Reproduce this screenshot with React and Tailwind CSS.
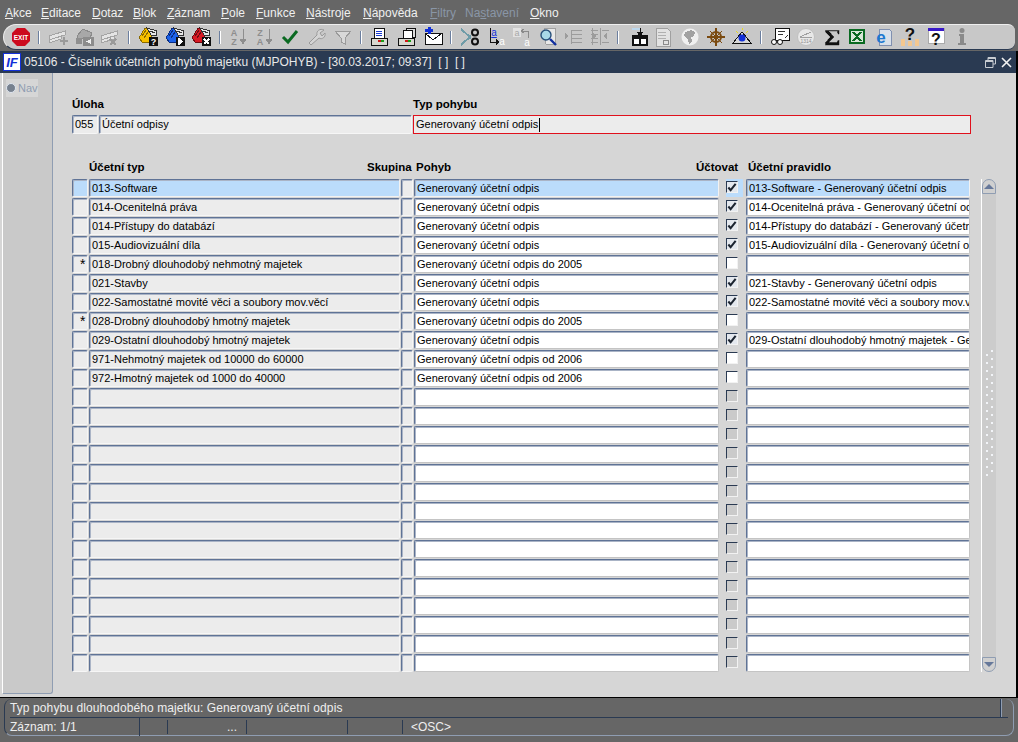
import React from 'react';

const menus = [
  ['A', 'kce', 'w-[36px]'],
  ['E', 'ditace', 'w-[51px]'],
  ['D', 'otaz', 'w-[41px]'],
  ['B', 'lok', 'w-[34px]'],
  ['Z', 'áznam', 'w-[54px]'],
  ['P', 'ole', 'w-[35px]'],
  ['F', 'unkce', 'w-[50px]'],
  ['N', 'ástroje', 'w-[57px]'],
  ['N', 'ápověda', 'w-[67px]'],
];

const rows = [
  { typ: '013-Software', pohyb: 'Generovaný účetní odpis', check: true, rule: '013-Software - Generovaný účetní odpis', active: true },
  { typ: '014-Ocenitelná práva', pohyb: 'Generovaný účetní odpis', check: true, rule: '014-Ocenitelná práva - Generovaný účetní odpis' },
  { typ: '014-Přístupy do databází', pohyb: 'Generovaný účetní odpis', check: true, rule: '014-Přístupy do databází - Generovaný účetní odpis' },
  { typ: '015-Audiovizuální díla', pohyb: 'Generovaný účetní odpis', check: true, rule: '015-Audiovizuální díla - Generovaný účetní odpis' },
  { typ: '018-Drobný dlouhodobý nehmotný majetek', pohyb: 'Generovaný účetní odpis do 2005', check: false, rule: '', star: true },
  { typ: '021-Stavby', pohyb: 'Generovaný účetní odpis', check: true, rule: '021-Stavby - Generovaný účetní odpis' },
  { typ: '022-Samostatné movité věci a soubory mov.věcí', pohyb: 'Generovaný účetní odpis', check: true, rule: '022-Samostatné movité věci a soubory mov.věcí - Generovaný' },
  { typ: '028-Drobný dlouhodobý hmotný majetek', pohyb: 'Generovaný účetní odpis do 2005', check: false, rule: '', star: true },
  { typ: '029-Ostatní dlouhodobý hmotný majetek', pohyb: 'Generovaný účetní odpis', check: true, rule: '029-Ostatní dlouhodobý hmotný majetek - Generovaný účetní odpis' },
  { typ: '971-Nehmotný majetek od 10000 do 60000', pohyb: 'Generovaný účetní odpis od 2006', check: false, rule: '' },
  { typ: '972-Hmotný majetek od 1000 do 40000', pohyb: 'Generovaný účetní odpis od 2006', check: false, rule: '' },
];
const allRows = [...rows, ...Array.from({ length: 15 }, () => ({ empty: true }))];

function Field({ className = '', tone = 'grey', children }) {
  const bg = tone === 'active' ? 'bg-[#bbdcfb] border-r-[#f2f2f2] border-b-[#f2f2f2]' : tone === 'white' ? 'bg-white border-r-[#c4c4c4] border-b-[#c4c4c4]' : 'bg-[#ececec] border-r-[#f6f6f6] border-b-[#f6f6f6]';
  return (
    <div className={`h-[18px] shrink-0 overflow-hidden whitespace-nowrap rounded-[2px] border border-t-[#5f7396] border-l-[#5f7396] pl-[2px] pt-[1px] text-[11px] leading-[15px] text-black shadow-[inset_1px_1px_0_#aab4c6] ${bg} ${className}`}>
      {children}
    </div>
  );
}

function Check({ checked, empty, active }) {
  return (
    <div className={`ml-[7px] mr-[3px] flex h-[18px] w-[17px] shrink-0 items-start ${active ? 'bg-[#bbdcfb]' : ''}`}>
      <div className={`mt-[2px] flex h-[12px] w-[12px] items-center justify-center border border-t-[#2a3a52] border-l-[#2a3a52] border-r-[#f2f2f2] border-b-[#f2f2f2] ${empty ? 'bg-[#cacaca]' : checked ? 'bg-[#e4e8ee]' : 'bg-white'}`}>
        {checked && (
          <svg width="11" height="11" viewBox="0 0 11 11">
            <path d="M1.5 5.5 L4 8.5 L9.5 1.5" fill="none" stroke="#1c2430" strokeWidth="2.2" />
          </svg>
        )}
      </div>
    </div>
  );
}

function Ico({ children, className = '' }) {
  return (
    <div className={`flex h-[26px] w-[26px] shrink-0 items-center justify-center ${className}`}>
      <svg width="20" height="20" viewBox="0 0 20 20" shapeRendering="crispEdges" style={{ fontFamily: '"Liberation Sans", sans-serif' }}>
        {children}
      </svg>
    </div>
  );
}

function Sep({ className = 'w-[10px]' }) {
  return (
    <div className={`flex h-[26px] shrink-0 items-center justify-center ${className}`}>
      <div className="h-[13px] w-[2px] border-l border-l-[#6c7f9f] bg-white" />
    </div>
  );
}

function Folder({ color, dark, children }) {
  return (
    <>
      <path d="M0 11 L6 1 L14 4 L11 16 L3 15 Z" fill={color} stroke={dark} strokeWidth="1" />
      <path d="M3 9 L7 3 M5 11 L9 5" stroke={dark} strokeWidth="1" />
      <path d="M8 1 L18 4 L17 9 L12 8 Z" fill="#e8e8e8" stroke="#333" strokeWidth="1" />
      <path d="M11 4 L16 6" stroke="#333" />
      <rect x="10" y="10" width="9" height="9" fill="#111" />
      {children}
    </>
  );
}

function Toolbar() {
  return (
    <div className="mx-[3px] flex h-[26px] items-center rounded-l-[13px] rounded-tr-[7px] rounded-br-[7px] border-t border-l border-t-[#eeeeee] border-l-[#eeeeee] border-b border-b-[#2a3a52] bg-[#c8c8c8] pl-[4px] pr-[6px]">
      <Ico>
        <path d="M6 1 H14 L19 6 V14 L14 19 H6 L1 14 V6 Z" fill="#cc0a1e" shapeRendering="auto" />
        <text x="10" y="12.5" textAnchor="middle" fontSize="6.5" fontWeight="700" fill="#fff">EXIT</text>
      </Ico>
      <Sep />
      <Ico className="ml-[1px]">
        <path d="M1 9 L17 4 V8 L1 13 Z M1 13 L13 9 V12 L1 16 Z" fill="#e4e4e4" stroke="#a4a4a4" strokeWidth="1" />
        <path d="M12 13 H15 V10 H17 V13 H20 V15 H17 V18 H15 V15 H12 Z" fill="#9a9a9a" />
      </Ico>
      <Ico className="ml-[1px]">
        <path d="M2 9 L8 2 L17 6 L15 11 H3 Z" fill="#a8a8a8" stroke="#8a8a8a" strokeWidth="1" />
        <rect x="1" y="11" width="6" height="6" fill="#8f8f8f" />
        <rect x="8" y="10" width="11" height="9" fill="#8c8c8c" />
        <path d="M16 12 V17 L11 14.5 Z" fill="#eee" />
      </Ico>
      <Ico className="-ml-[1px]">
        <path d="M1 9 L17 4 V8 L1 13 Z M1 13 L14 9 V12 L1 16 Z" fill="#e4e4e4" stroke="#a4a4a4" strokeWidth="1" />
        <path d="M10 12 L16 18 M16 12 L10 18" stroke="#9a9a9a" strokeWidth="2" />
      </Ico>
      <Sep className="w-[12px]" />
      <Ico className="ml-[1px]">
        <Folder color="#f7c000" dark="#8a6a00">
          <text x="14.5" y="18" textAnchor="middle" fontSize="9" fontWeight="700" fill="#fff">?</text>
        </Folder>
      </Ico>
      <Ico className="ml-[1px]">
        <Folder color="#1c62e8" dark="#0a2c80">
          <path d="M12 11 H13 L17 14 V15 L13 18 H12 Z" fill="#fff" />
        </Folder>
      </Ico>
      <Ico>
        <Folder color="#d81a24" dark="#700a10">
          <path d="M12 12 L17 17 M17 12 L12 17" stroke="#fff" strokeWidth="1.6" />
        </Folder>
      </Ico>
      <Sep className="w-[10px]" />
      <Ico>
        <text x="6" y="9" textAnchor="middle" fontSize="9" fontWeight="700" fill="#8e8e8e">A</text>
        <text x="6" y="18" textAnchor="middle" fontSize="9" fontWeight="700" fill="#8e8e8e">Z</text>
        <path d="M15 2 V15 M12 12 H18 L15 17 Z" stroke="#8e8e8e" fill="#8e8e8e" strokeWidth="1" />
      </Ico>
      <Ico>
        <text x="6" y="9" textAnchor="middle" fontSize="9" fontWeight="700" fill="#8e8e8e">Z</text>
        <text x="6" y="18" textAnchor="middle" fontSize="9" fontWeight="700" fill="#8e8e8e">A</text>
        <path d="M15 2 V15 M12 12 H18 L15 17 Z" stroke="#8e8e8e" fill="#8e8e8e" strokeWidth="1" />
      </Ico>
      <Ico>
        <path d="M3 10 L8 15 L17 4" fill="none" stroke="#0b6a22" strokeWidth="3" shapeRendering="auto" />
      </Ico>
      <Ico className="ml-[1px]">
        <path d="M4 18 L2 16 L10 8 C9 4 13 1 17 3 L13 6 L15 9 L18 6 C19 10 15 13 12 11 Z" fill="#d4d4d4" stroke="#9a9a9a" strokeWidth="1" shapeRendering="auto" />
      </Ico>
      <Ico>
        <path d="M2 4 H18 L12 11 V17 L8 15 V11 Z" fill="#d8d8d8" stroke="#9a9a9a" strokeWidth="1" />
      </Ico>
      <Sep className="w-[10px]" />
      <Ico>
        <rect x="5" y="1" width="10" height="10" fill="#fff" stroke="#111" />
        <path d="M7 4 H13 M7 6 H13 M7 8 H13" stroke="#1a3ad0" />
        <rect x="2" y="11" width="16" height="7" fill="#d8d8d0" stroke="#111" />
        <rect x="9" y="13" width="3" height="2" fill="#d01818" />
        <rect x="12" y="13" width="3" height="2" fill="#18a018" />
      </Ico>
      <Ico className="ml-[2px]">
        <rect x="9" y="1" width="9" height="9" fill="#ddd" stroke="#111" />
        <rect x="6" y="3" width="9" height="9" fill="#fff" stroke="#111" />
        <rect x="1" y="11" width="16" height="7" fill="#d8d8d0" stroke="#111" />
        <rect x="8" y="13" width="3" height="2" fill="#d01818" />
        <rect x="11" y="13" width="3" height="2" fill="#18a018" />
      </Ico>
      <Ico>
        <rect x="2" y="6" width="17" height="11" fill="#fff" stroke="#111" />
        <path d="M2 6 L10 13 L19 6" fill="none" stroke="#111" />
        <path d="M2 2 H5 V0 H8 V2 H10 V5 H8 V7 H5 V5 H2 Z" fill="#1230d8" />
      </Ico>
      <Sep className="w-[10px]" />
      <Ico className="ml-[1px]">
        <path d="M1 2 L11 11 M1 18 L11 9" stroke="#6f9ca8" strokeWidth="2" />
        <circle cx="15" cy="5.5" r="3" fill="none" stroke="#111" strokeWidth="2" shapeRendering="auto" />
        <circle cx="15" cy="14.5" r="3" fill="none" stroke="#111" strokeWidth="2" shapeRendering="auto" />
      </Ico>
      <Ico>
        <text x="8" y="9" textAnchor="middle" fontSize="10" fill="#1230d8" textDecoration="underline">a</text>
        <path d="M4 1 V15 H11" fill="none" stroke="#111" />
        <path d="M10 12 L14 15 L10 18 Z" fill="#111" />
        <text x="16" y="18" textAnchor="middle" fontSize="10" fill="#fff">a</text>
      </Ico>
      <Ico>
        <rect x="1" y="1" width="8" height="9" fill="#e2e2e2" />
        <text x="5" y="9" textAnchor="middle" fontSize="9" fill="#a8a8a8">a</text>
        <path d="M16 4 H10 M12 2 L9 4 L12 6 M16 4 V11" fill="none" stroke="#8a8a8a" />
        <text x="15" y="19" textAnchor="middle" fontSize="10" fill="#fff">a</text>
      </Ico>
      <Ico>
        <path d="M6 1 H17 V17 H8 Z" fill="#e8e8e8" stroke="#a0a0a0" />
        <circle cx="8" cy="8" r="5" fill="#a8d8e8" stroke="#28507a" strokeWidth="1.4" shapeRendering="auto" />
        <path d="M12 12 L18 18" stroke="#1230a0" strokeWidth="2.4" shapeRendering="auto" />
      </Ico>
      <Ico>
        <path d="M7 3 H18 M7 7 H18 M7 11 H18 M7 15 H18" stroke="#9c9c9c" />
        <path d="M7 3 V17" stroke="#9c9c9c" />
        <path d="M1 6 L5 9 L1 12 Z" fill="#9c9c9c" />
      </Ico>
      <Ico>
        <path d="M1 3 H8 M1 7 H8 M1 11 H8 M1 15 H8 M12 3 H19 M12 15 H19 M10 1 V18 M2 1 V18" stroke="#9c9c9c" />
        <path d="M3 6 L7 9 L3 12 Z M17 6 L13 9 L17 12 Z" fill="#9c9c9c" />
      </Ico>
      <Sep className="w-[10px]" />
      <Ico className="ml-[4px]">
        <rect x="2" y="8" width="16" height="11" fill="#111" />
        <path d="M2 1 H10 V3 H2 Z" fill="#bcd8ee" />
        <rect x="4" y="12" width="5" height="5" fill="#fff" />
        <rect x="11" y="12" width="5" height="5" fill="#fff" />
        <path d="M10 1 V8 M7 5 H13 L10 9 Z" stroke="#111" fill="#111" />
      </Ico>
      <Ico className="-ml-[3px]">
        <path d="M3 1 H14 L17 4 V19 H3 Z" fill="#e2e2e2" stroke="#a0a0a0" />
        <path d="M5 5 H13 M5 8 H13 M5 11 H13" stroke="#b0b0b0" />
        <rect x="10" y="13" width="5" height="4" fill="none" stroke="#8a8a8a" />
      </Ico>
      <Ico className="ml-[1px]">
        <circle cx="10" cy="10" r="8.5" fill="#f0f0f0" shapeRendering="auto" />
        <path d="M5 5 L11 3 L15 5 L14 9 L11 10 L12 14 L9 17 L8 12 L4 9 Z" fill="#a2a2a2" />
      </Ico>
      <Ico>
        <circle cx="10" cy="10" r="5" fill="none" stroke="#7a4a10" strokeWidth="2" shapeRendering="auto" />
        <path d="M1 10 H19 M10 1 V19 M4 4 L16 16 M16 4 L4 16" stroke="#7a4a10" strokeWidth="1.4" />
      </Ico>
      <Ico>
        <path d="M1 16 L10 5 L19 16 Z" fill="#d8d8d8" stroke="#111" strokeWidth="1" />
        <circle cx="10" cy="11" r="3.5" fill="#1230d8" shapeRendering="auto" />
        <path d="M4 4 L6 6 M10 1 V3 M16 4 L14 6" stroke="#e8dc20" strokeWidth="1" />
      </Ico>
      <Sep className="w-[12px]" />
      <Ico>
        <path d="M5 1 H19 V13 H5 Z" fill="#fff" stroke="#111" />
        <path d="M8 4 H15 M8 7 H13 M15 11 L18 8" stroke="#333" />
        <circle cx="4" cy="15" r="2.5" fill="#fff" stroke="#111" shapeRendering="auto" />
        <circle cx="10" cy="15" r="2.5" fill="#fff" stroke="#111" shapeRendering="auto" />
      </Ico>
      <Ico>
        <circle cx="10" cy="10" r="8.5" fill="#e8e8e8" stroke="#c0c0c0" shapeRendering="auto" />
        <path d="M4 10 L15 5 M4 10 H16" stroke="#a0a0a0" />
        <text x="10" y="16" textAnchor="middle" fontSize="5" fill="#909090">1314</text>
      </Ico>
      <Ico>
        <path d="M3 3 H17 V7 H16 L15 4 H7 L12 10 L7 15 H15 L16 13 H17 V18 H3 V16 L8 10 L3 5 Z" fill="#111" stroke="#777" strokeWidth="0.5" />
      </Ico>
      <Ico className="-ml-[1px]">
        <rect x="2" y="2" width="16" height="15" fill="#0a6a22" />
        <rect x="4" y="4" width="12" height="11" fill="#d8e8d8" />
        <path d="M6 5 L14 14 M14 5 L6 14" stroke="#0a6a22" strokeWidth="2" />
      </Ico>
      <Ico>
        <path d="M6 2 H16 L18 4 V18 H6 Z" fill="#d8e0ea" stroke="#8090b0" />
        <text x="8" y="16" textAnchor="middle" fontSize="17" fontWeight="700" fill="#1c78d0">e</text>
      </Ico>
      <Ico className="ml-[1px]">
        <text x="10" y="13" textAnchor="middle" fontSize="17" fontWeight="700" fill="#111">?</text>
        <rect x="1" y="12" width="4" height="7" fill="#f4c890" />
        <rect x="8" y="14" width="4" height="5" fill="#f4c890" />
        <rect x="15" y="12" width="4" height="7" fill="#f4c890" />
      </Ico>
      <Ico>
        <rect x="2" y="1" width="16" height="15" fill="#fff" stroke="#aaa" />
        <rect x="2" y="1" width="16" height="3" fill="#3818c8" />
        <text x="10" y="18" textAnchor="middle" fontSize="16" fontWeight="700" fill="#111">?</text>
      </Ico>
      <Ico>
        <circle cx="10" cy="3.5" r="2.5" fill="#8a8a8a" shapeRendering="auto" />
        <path d="M7 7 H12 V16 H14 V18 H6 V16 H8 V9 H7 Z" fill="#8a8a8a" />
      </Ico>
    </div>
  );
}

function GripColumn({ className = '' }) {
  return (
    <div className={`flex flex-col gap-[6px] ${className}`}>
      {Array.from({ length: 16 }, (_, i) => (
        <div key={i} className="h-[2px] w-[2px] bg-[#f2f4f8]" />
      ))}
    </div>
  );
}

function App() {
  return (
    <div className="flex h-[742px] w-[1018px] flex-col overflow-hidden bg-[#666666] text-[12px] font-['Liberation_Sans',Arial,sans-serif]">
      <div className="flex h-[24px] shrink-0 items-center pl-[5px] pt-[1px] text-[12px] text-[#f0f0f0]">
        {menus.map((m, i) => (
          <div key={i} className={m[2]}>
            <span className="underline">{m[0]}</span>{m[1]}
          </div>
        ))}
        <div className="w-[35px] text-[#8a96a6]">
          <span className="underline">F</span>iltry
        </div>
        <div className="w-[65px] text-[#8a96a6]">
          Na<span className="underline">s</span>tavení
        </div>
        <div>
          <span className="underline">O</span>kno
        </div>
      </div>

      <Toolbar />

      <div className="mt-[1px] flex h-[647px] shrink-0 flex-col border-r-2 border-b border-r-black border-b-black">
        <div className="flex h-[22px] shrink-0 items-center bg-[#2a3a52] pl-[3px] text-[#e8e8e8]">
          <svg width="18" height="18" viewBox="0 0 18 18" className="mr-[3px] shrink-0" style={{ fontFamily: '"Liberation Sans", sans-serif' }}>
            <rect x="0.5" y="0.5" width="17" height="17" fill="#fff" stroke="#1230d8" />
            <text x="9" y="14" textAnchor="middle" fontSize="13" fontWeight="700" fontStyle="italic" fill="#1230d8">IF</text>
          </svg>
          <span className="whitespace-pre">05106 - Číselník účetních pohybů majetku (MJPOHYB) - [30.03.2017; 09:37]  [ ]  [ ]</span>
          <div className="ml-auto mr-[4px] flex items-center gap-[5px]">
            <svg width="11" height="11" viewBox="0 0 11 11">
              <path d="M3 3 V0.5 H10.5 V7 H8 M0.5 3.5 H8 V10.5 H0.5 Z M3 1.5 H10 M1 4.5 H8" fill="none" stroke="#c8ccd2" />
            </svg>
            <svg width="11" height="11" viewBox="0 0 11 11">
              <path d="M1 1 L10 10 M10 1 L1 10" stroke="#f2f2f2" strokeWidth="1.6" />
            </svg>
          </div>
        </div>

        <div className="flex min-h-0 flex-1 bg-[#d6d6d6]">
          <div className="ml-[2px] mb-[3px] w-[51px] shrink-0 rounded-br-[3px] border-l border-r border-b border-l-white border-r-[#8f9db2] border-b-[#8f9db2] bg-[#c9c9c9] pl-[3px] pt-[6px]">
            <div className="flex h-[18px] w-[32px] items-center gap-[2px] bg-[#d6d6d6] text-[11px] text-[#8f9db2]">
              <div className="h-[10px] w-[10px] shrink-0 rounded-full border border-[#dfe6f0] bg-[#77818f]" />
              Nav
            </div>
          </div>

          <div className="min-w-0 flex-1 pl-[19px]">
            <div className="h-[23px]" />
            <div className="flex h-[18px] items-center text-[11.5px] font-bold text-black">
              <div className="w-[341px]">Úloha</div>
              <div>Typ pohybu</div>
            </div>
            <div className="mt-[1px] flex h-[19px]">
              <Field className="h-[19px] w-[26px]">055</Field>
              <Field className="ml-[1px] h-[19px] w-[313px]">Účetní odpisy</Field>
              <div className="ml-[1px] flex h-[19px] w-[558px] items-center border border-[#e0101c] bg-[#ececec] pl-[2px] text-[11px] text-black">
                Generovaný účetní odpis
                <div className="ml-[1px] h-[14px] w-[1px] bg-black" />
              </div>
            </div>

            <div className="mt-[23px] flex h-[21px] items-center text-[11.5px] font-bold text-black">
              <div className="ml-[17px] w-[278px]">Účetní typ</div>
              <div className="w-[44px] text-right">Skupina</div>
              <div className="ml-[5px] w-[280px]">Pohyb</div>
              <div className="w-[37px] text-right">Účtovat</div>
              <div className="ml-[15px]">Účetní pravidlo</div>
            </div>

            <div className="mt-[1px] flex">
              <div className="flex w-[898px] shrink-0 flex-col gap-[1px]">
                {allRows.map((r, i) => (
                  <div key={i} className="flex">
                    <Field tone={r.active ? 'active' : 'grey'} className="w-[16px]">
                      {r.star && <div className="pl-[5px] text-[14px] leading-[14px]">*</div>}
                    </Field>
                    <Field tone={r.active ? 'active' : 'grey'} className="ml-[1px] w-[311px]">{r.typ}</Field>
                    <Field tone="grey" className="ml-[1px] w-[12px]" />
                    <Field tone={r.active ? 'active' : 'white'} className="ml-[1px] w-[305px]">{r.pohyb}</Field>
                    <Check checked={r.check} empty={r.empty} active={r.active} />
                    <Field tone={r.active ? 'active' : 'white'} className="w-[224px]">{r.rule}</Field>
                  </div>
                ))}
              </div>

              <div className="ml-[11px] flex h-[493px] w-[15px] shrink-0 flex-col border-l border-l-white">
                <div className="flex h-[15px] items-center justify-center rounded-t-[7px] border border-[#8f9db2] bg-[#d0d0d0]">
                  <div className="h-0 w-0 border-x-[5px] border-b-[5px] border-x-transparent border-b-[#66789a]" />
                </div>
                <div className="flex flex-1 items-start justify-center gap-[3px] bg-[#cccccc]">
                  <GripColumn className="mt-[160px]" />
                  <GripColumn className="mt-[156px]" />
                </div>
                <div className="flex h-[15px] items-center justify-center rounded-b-[7px] border border-[#8f9db2] bg-[#d0d0d0]">
                  <div className="h-0 w-0 border-x-[5px] border-t-[5px] border-x-transparent border-t-[#66789a]" />
                </div>
              </div>
            </div>
          </div>
        </div>
      </div>

      <div className="ml-[4px] mr-[4px] mb-[6px] mt-[1px] flex min-h-0 flex-1 flex-col rounded-[8px] border-l border-r border-b border-l-[#2a3a52] border-r-[#8f9db2] border-b-[#8f9db2] text-[12px] text-[#eeeeee]">
        <div className="mx-[5px] flex h-[19px] shrink-0 items-center border-b border-b-[#2a3a52]">
          <span className="flex-1 tracking-[0.1px]">Typ pohybu dlouhodobého majetku: Generovaný účetní odpis</span>
          <div className="mr-[6px] h-[18px] w-[2px] border-l border-l-[#2a3a52] bg-[#8f9db2]" />
        </div>
        <div className="ml-[5px] flex h-[18px] items-center">
          <div className="w-[130px] border-r border-r-[#2a3a52]">Záznam: 1/1</div>
          <div className="h-[14px] w-[28px] border-r border-r-[#2a3a52]" />
          <div className="w-[79px] border-r border-r-[#2a3a52] pr-[9px] text-right leading-[14px]">...</div>
          <div className="h-[14px] w-[101px] border-r border-r-[#2a3a52]" />
          <div className="h-[14px] w-[55px] border-r border-r-[#2a3a52]" />
          <div className="pl-[8px]">&lt;OSC&gt;</div>
        </div>
      </div>
    </div>
  );
}

export default App;
